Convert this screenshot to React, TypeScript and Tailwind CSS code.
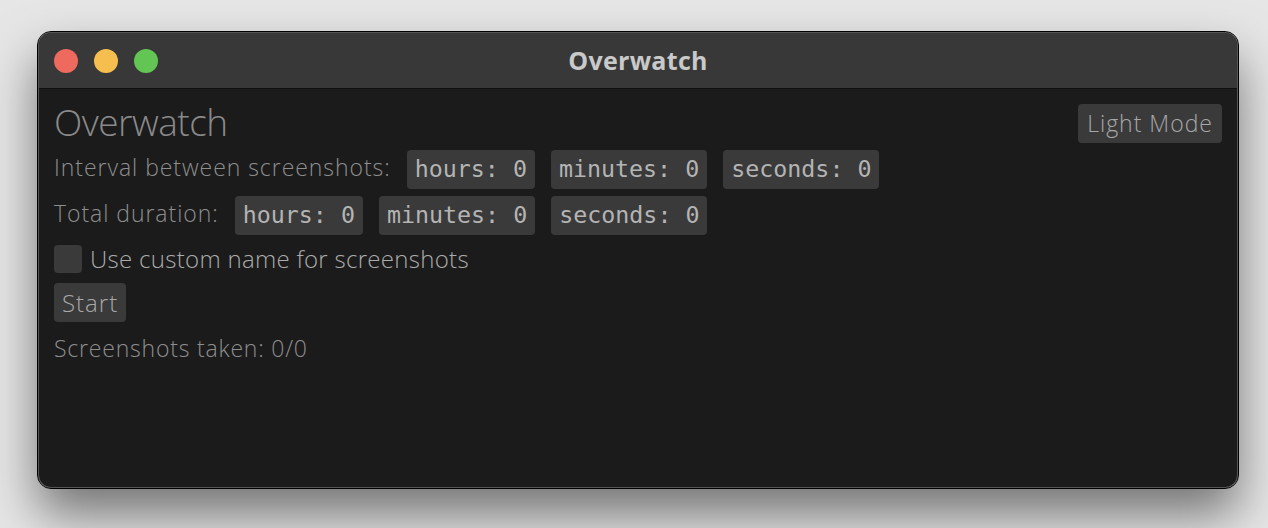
const sans = "font-['Open_Sans','Noto_Sans',sans-serif]";
const mono = "font-['DejaVu_Sans_Mono',monospace]";

function Field({ label }: { label: string }) {
  return (
    <div className={`${mono} h-[39px] px-[8px] flex items-center rounded-[4px] bg-[#3a3a3a] text-[#b4b4b4] text-[23.3px] whitespace-pre`}>
      {label}: 0
    </div>
  );
}

function TimeRow({ title }: { title: string }) {
  return (
    <div className="flex items-center gap-4">
      <span className="text-[23px] font-light tracking-[0.95px] text-[#8e8e8e] -mt-1">{title}</span>
      <Field label="hours" />
      <Field label="minutes" />
      <Field label="seconds" />
    </div>
  );
}

export default function App() {
  return (
    <div className={`${sans} h-[528px] w-[1268px] bg-[#e6e6e6] pt-[32px] px-[38px] overflow-hidden`}>
      <div className="w-[1200px] h-[456px] rounded-[13px] overflow-hidden border border-[#555] outline outline-1 outline-black shadow-[0_26px_50px_rgba(0,0,0,0.5)] flex flex-col bg-[#1b1b1b]">
        {/* title bar */}
        <div className="h-[56px] shrink-0 bg-[#383838] border-b border-[#111] flex items-center relative">
          <div className="flex items-center gap-4 pl-[15px]">
            <div className="w-6 h-6 rounded-full bg-[#ee6a5f]" />
            <div className="w-6 h-6 rounded-full bg-[#f5be4f]" />
            <div className="w-6 h-6 rounded-full bg-[#62c554]" />
          </div>
          <div className="absolute inset-0 flex items-center justify-center text-[25px] tracking-[0.3px] font-bold text-[#c9c9c9]">Overwatch</div>
        </div>

        {/* content */}
        <div className="flex-1 px-[15px] pt-[15px] flex flex-col">
          <div className="flex items-start justify-between">
            <h1 className="text-[37px] font-light tracking-[-0.5px] text-[#8a8a8a] leading-none -mt-[1px]">Overwatch</h1>
            <button className="h-[39px] px-[9px] rounded-[4px] bg-[#3a3a3a] text-[#a8a8a8] text-[23px] tracking-[1px] font-light">Light Mode</button>
          </div>
          <div className="mt-[7px] flex flex-col gap-[7px]">
            <TimeRow title="Interval between screenshots:" />
            <TimeRow title="Total duration:" />
          </div>
          <label className="mt-[6px] flex items-center gap-2">
            <span className="w-[28px] h-[28px] rounded-[4px] bg-[#3a3a3a]" />
            <span className="text-[24px] font-light tracking-[0.3px] text-[#ababab]">Use custom name for screenshots</span>
          </label>
          <div className="mt-[6px]">
            <button className="h-[39px] px-[8px] rounded-[4px] bg-[#3a3a3a] text-[#a8a8a8] text-[24px] tracking-[1px] font-light">Start</button>
          </div>
          <div className="mt-[9px] text-[23px] font-light tracking-[0.8px] text-[#8e8e8e]">Screenshots taken: 0/0</div>
        </div>
      </div>
    </div>
  );
}
